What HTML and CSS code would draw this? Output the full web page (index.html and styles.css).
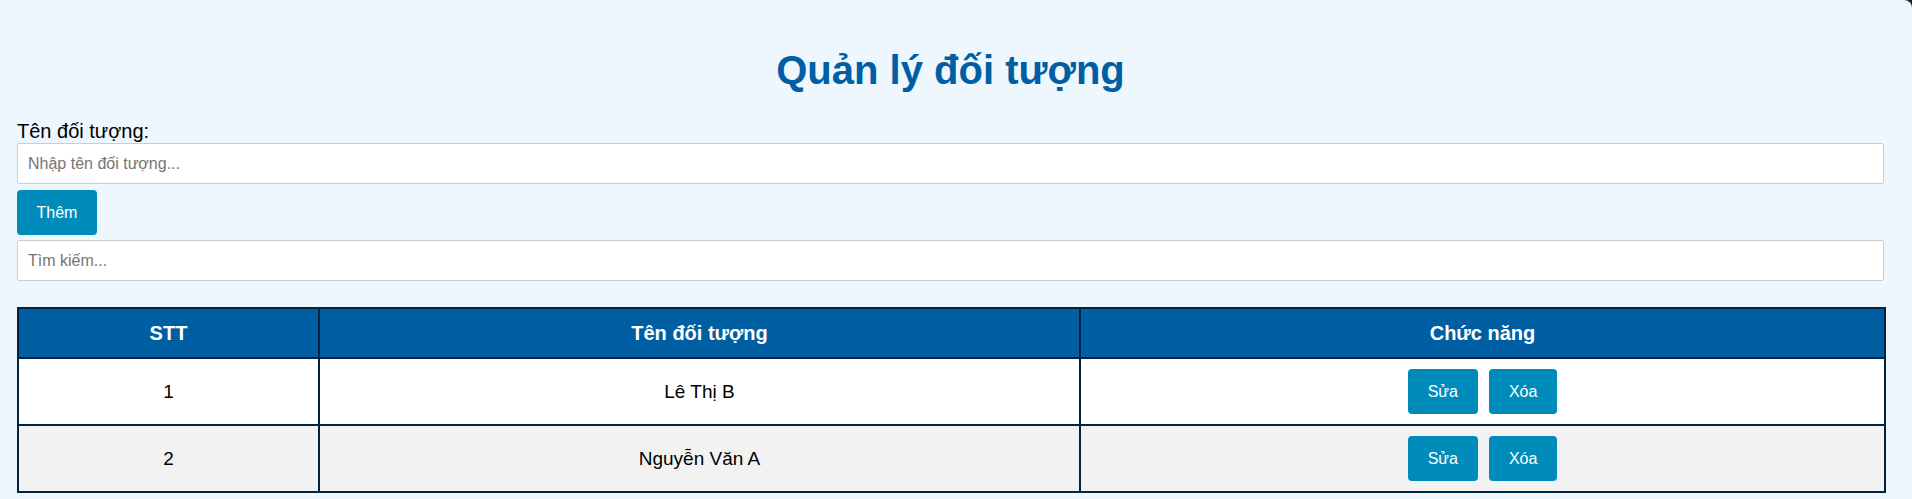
FILE: index.html
```html
<!DOCTYPE html>
<html lang="vi">
<head>
<meta charset="utf-8">
<title>Quản lý đối tượng</title>
<link rel="stylesheet" href="styles.css">
</head>
<body>
<div class="page">
  <div class="container">
    <h1 class="title">Quản lý đối tượng</h1>
    <label class="field-label" for="name">Tên đối tượng:</label>
    <input class="text-input" id="name" type="text" placeholder="Nhập tên đối tượng...">
    <button class="btn btn-add" type="button">Thêm</button>
    <input class="text-input search-input" type="text" placeholder="Tìm kiếm...">
    <table class="data-table">
      <colgroup>
        <col class="col-stt">
        <col class="col-name">
        <col class="col-actions">
      </colgroup>
      <thead>
        <tr>
          <th>STT</th>
          <th>Tên đối tượng</th>
          <th>Chức năng</th>
        </tr>
      </thead>
      <tbody>
        <tr>
          <td>1</td>
          <td>Lê Thị B</td>
          <td><div class="actions"><button class="btn" type="button">Sửa</button><button class="btn" type="button">Xóa</button></div></td>
        </tr>
        <tr>
          <td>2</td>
          <td>Nguyễn Văn A</td>
          <td><div class="actions"><button class="btn" type="button">Sửa</button><button class="btn" type="button">Xóa</button></div></td>
        </tr>
      </tbody>
    </table>
  </div>
</div>
</body>
</html>
```
FILE: styles.css
```css
html {
  background: #1b1f24;
  height: 100%;
}
body {
  margin: 0;
  height: 100%;
  font-family: "Liberation Sans", Arial, sans-serif;
  color: #000;
}
.page {
  background: #eef6fe;
  min-height: 100%;
  border-top-right-radius: 8px;
  overflow: hidden;
}
.container {
  margin: 0 28px 0 17px;
  padding-top: 47px;
  display: flex;
  flex-direction: column;
  align-items: flex-start;
}
.title {
  align-self: stretch;
  margin: 0 0 26px;
  font-size: 40px;
  line-height: 46px;
  font-weight: bold;
  text-align: center;
  color: #005fa3;
}
.field-label {
  font-size: 20px;
  line-height: 24px;
}
.text-input {
  align-self: stretch;
  box-sizing: border-box;
  height: 41px;
  margin: 0;
  padding: 0 10px;
  border: 1px solid #cccccc;
  border-radius: 2px;
  background: #fff;
  font-family: "Liberation Sans", Arial, sans-serif;
  font-size: 16px;
  color: #000;
}
.text-input::placeholder {
  color: #757575;
}
.search-input {
  margin-top: 5px;
}
.btn {
  box-sizing: border-box;
  height: 45px;
  padding: 0 20px;
  border: none;
  border-radius: 4px;
  background: #008cba;
  color: #fff;
  font-family: "Liberation Sans", Arial, sans-serif;
  font-size: 16px;
  line-height: 19px;
  cursor: pointer;
}
.btn-add {
  margin-top: 6px;
  width: 80px;
  padding: 0;
}
.data-table {
  align-self: stretch;
  width: calc(100% + 2px);
  margin-top: 26px;
  border-collapse: collapse;
  table-layout: fixed;
  border: 2px solid #01233f;
}
.col-stt { width: 301px; }
.col-name { width: 761px; }
.data-table th,
.data-table td {
  border: 2px solid #01233f;
  text-align: center;
}
.data-table th {
  background: #005fa3;
  color: #fff;
  font-size: 20px;
  line-height: 24px;
  font-weight: bold;
  padding: 12px 10px;
}
.data-table td {
  font-size: 19px;
  padding: 10px;
  background: #fff;
}
.data-table tbody tr:nth-child(2) td {
  background: #f2f2f2;
}
.actions {
  display: flex;
  justify-content: center;
  gap: 11px;
}
.actions .btn {
  min-width: 67px;
}
```
